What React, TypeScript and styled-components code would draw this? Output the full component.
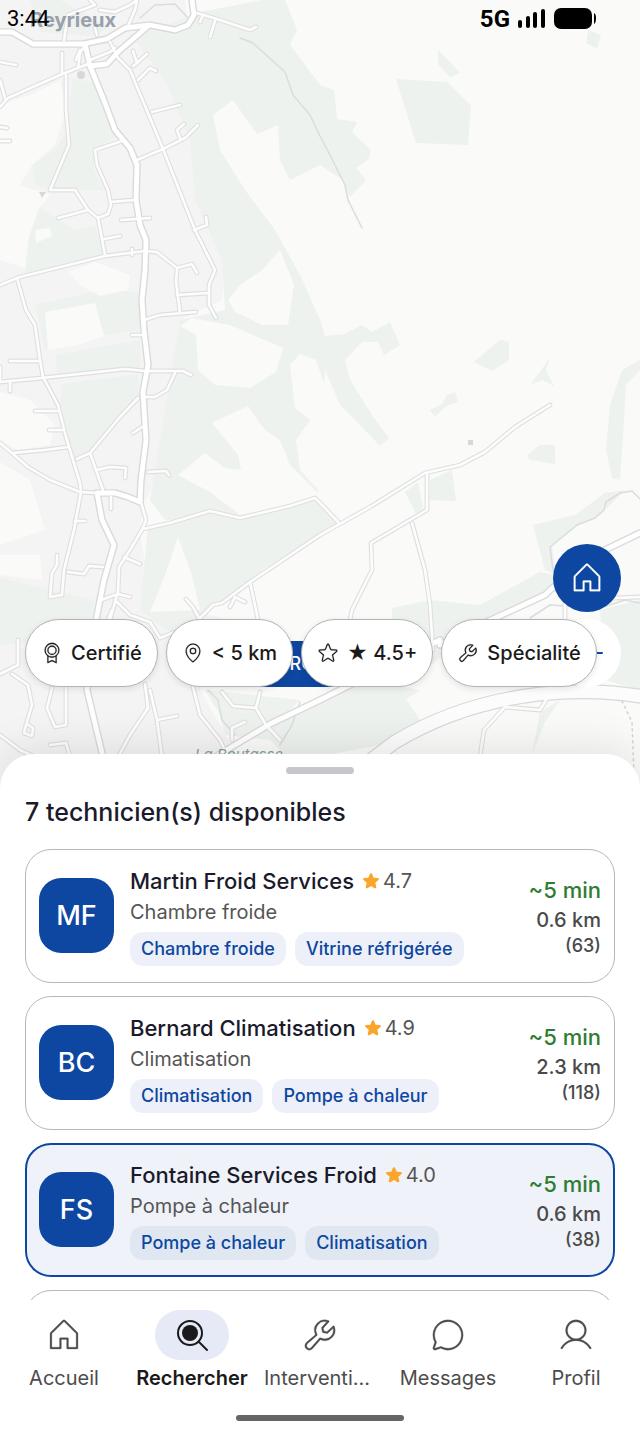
import { useState } from "react";
import styled, { createGlobalStyle } from "styled-components";
import {
   PiChatCircleLight,
   PiHouseLight,
   PiMapPinLight,
   PiMedalLight,
   PiStarFill,
   PiStarLight,
   PiUserLight,
   PiWrenchLight,
} from "react-icons/pi";

interface Technician {
   id: number;
   initials: string;
   name: string;
   rating: string;
   job: string;
   tags: string[];
   eta: string;
   distance: string;
   reviews: number;
}

const technicians: Technician[] = [
   {
      id: 1,
      initials: "MF",
      name: "Martin Froid Services",
      rating: "4.7",
      job: "Chambre froide",
      tags: ["Chambre froide", "Vitrine réfrigérée"],
      eta: "~5 min",
      distance: "0.6 km",
      reviews: 63,
   },
   {
      id: 2,
      initials: "BC",
      name: "Bernard Climatisation",
      rating: "4.9",
      job: "Climatisation",
      tags: ["Climatisation", "Pompe à chaleur"],
      eta: "~5 min",
      distance: "2.3 km",
      reviews: 118,
   },
   {
      id: 3,
      initials: "FS",
      name: "Fontaine Services Froid",
      rating: "4.0",
      job: "Pompe à chaleur",
      tags: ["Pompe à chaleur", "Climatisation"],
      eta: "~5 min",
      distance: "0.6 km",
      reviews: 38,
   },
];

const filters = [
   { label: "Certifié", icon: <PiMedalLight /> },
   { label: "< 5 km", icon: <PiMapPinLight /> },
   { label: "★ 4.5+", icon: <PiStarLight /> },
   { label: "Spécialité", icon: <PiWrenchLight /> },
];

const tabs = [
   { label: "Accueil", icon: <PiHouseLight /> },
   { label: "Rechercher", icon: <SearchIcon /> },
   { label: "Interventions", icon: <PiWrenchLight /> },
   { label: "Messages", icon: <PiChatCircleLight /> },
   { label: "Profil", icon: <PiUserLight /> },
];

const builtUp =
   "M0 0H185L190 40L165 60L195 120L200 180L230 235L222 300L180 320L172 400L165 470L145 500L140 530L150 600L230 620L200 690L240 760L230 800H0Z";

const woods = [
   "M30 0H60L110 28L90 36L40 32Z",
   "M130 34L170 24L200 12L262 0H285L297 30L290 45L320 85L334 90L337 119L357 122L352 132L371 150L368 160L356 168L366 180L350 197L343 180L320 165L290 180L280 160L278 125L257 134L233 100L213 115L220 150L245 190L275 230L300 275L320 320L325 336L345 334L362 325L372 332L390 322L400 345L384 355L378 342L362 342L345 360L350 380L372 415L389 438L380 446L355 420L340 405L325 370L318 500L290 506L240 518L165 520L150 500L160 440L170 380L180 320L225 310L222 260L195 200L190 140L165 80Z",
   "M72 78L100 84L118 135L96 150L94 170L105 190L75 190L50 190L35 185L32 165L55 150L68 130Z",
   "M40 208L75 230L95 225L104 255L25 275L30 235Z",
   "M148 526L210 513L240 520L315 500L338 522L320 535L262 570L215 606L180 640L140 610Z",
   "M35 305L100 290L140 292V330L100 336L45 350L40 325Z",
   "M55 355L140 340L140 368L58 376Z",
   "M62 384L138 374L140 395L90 452L74 458L60 410Z",
   "M0 578L50 590L95 600L85 640L0 645Z",
   "M396 79L447 82L471 106L468 145L416 143Z",
   "M438 50L460 73L450 77L438 64Z",
   "M588 30L601 35L597 49L586 43Z",
   "M474 362L500 340L509 342V360L492 371Z",
   "M430 410L442 404L447 395L455 392L458 402L445 407L435 417Z",
   "M530 385L550 358L546 370L554 386L542 380Z",
   "M527 455L540 445L555 445V464L530 460Z",
   "M430 480L452 470L456 501L430 500Z",
   "M405 492L418 482L424 512L416 514Z",
   "M640 360L622 370L610 405L606 450L612 478L620 480L624 420L626 385L640 370Z",
   "M533 525L575 515L605 493L625 490L600 515L577 526L552 546L556 575L545 570Z",
   "M392 608L430 600L480 605L540 572L556 575L550 590L480 625L400 690L420 720L380 745L300 760L330 715L392 660Z",
   "M205 690L220 715L225 735L270 740L300 770L420 690L360 680L280 720L300 700Z",
   "M540 712L560 700L545 722L532 754Z",
   "M600 610L640 600V690L605 680Z",
];

const fields = [
   "M0 105L30 95L60 80L66 110L55 145L32 165L20 185L50 195L38 210L28 240L25 268L0 260Z",
   "M45 312L95 303L104 336L78 345L48 350Z",
   "M68 272L95 262L130 275L128 290L100 296L80 285Z",
   "M35 230L50 228L52 236L36 243Z",
   "M0 392L30 400L55 425L50 445L18 450L0 440Z",
   "M0 462L30 480L45 530L0 545Z",
   "M0 555L40 555L42 580L0 575Z",
   "M192 318L230 325L283 348L276 372L250 388L215 385L198 370L196 335L180 326Z",
   "M228 300L240 285L262 270L280 250L294 285L288 325L262 325L235 312Z",
   "M212 423L235 412L248 406L265 430L280 440L290 465L320 495L318 498L290 505L240 515L210 492L178 475L205 453L225 468L241 470L238 455Z",
   "M290 365L300 354L316 360L330 400L340 405L380 446L345 485L318 490L300 470L296 440L310 420L295 408Z",
   "M178 537L192 575L200 610L150 612L165 575Z",
];

const lanes = [
   "M0 107L8 98L60 75L88 64",
   "M0 62L16 65M0 127L7 128M0 141L10 141M0 80L5 98",
   "M66 75L66 110L69 145L50 190L75 190L88 210L98 218L105 255",
   "M98 218L108 214L111 205L108 190L97 165L95 150L122 141",
   "M110 202L134 200M58 218L88 210M62 53V74M104 239L120 236M121 220L150 218M132 249V255",
   "M0 285L20 277L105 256L145 251L157 252L177 268L176 282L180 312",
   "M177 268L192 264L197 273M177 295L209 293",
   "M17 278L26 310L35 325L40 360L43 377L58 405L66 437L80 483L81 492L74 530L64 570L62 595L50 597L52 573L57 565V555",
   "M0 443L12 453L28 467L50 480L80 492L97 493",
   "M0 382L42 378L125 369L145 371L183 371L191 375",
   "M175 373L167 390L155 397L143 397",
   "M138 398L120 417L90 453L77 459M90 453L96 470L103 490",
   "M96 470L110 467L126 468L125 478M12 453L45 450L68 447",
   "M35 411H58M49 430H63M10 361H39M10 381V391M0 367V382M132 335H143",
   "M76 60L80 50M110 42L118 58L130 70L163 149L195 230L215 270L209 285L209 305L216 318",
   "M137 160L163 149L185 138L198 125M180 138L177 130L184 124M152 112L180 105",
   "M133 51L137 63L133 66M137 63L147 54M138 80L150 68L156 71",
   "M194 230L207 225L206 217M144 320L160 315L196 312",
   "M148 472L166 471L169 475M133 433L142 427M75 521H85M111 497V509",
   "M141 502L146 520L143 528L130 550L119 567L118 592L110 620",
   "M143 529L170 523L210 511L240 518L290 506L315 498L325 508L338 522",
   "M68 572L84 574L89 566L103 567M124 557L140 564M101 600L118 594L130 597",
   "M200 618L213 605L222 603L250 582L320 535L370 507L425 473L460 465L485 452L515 427L550 405",
   "M427 473L427 510L371 543L372 570L352 610L346 640",
   "M412 523L425 570L430 605L433 650",
   "M250 582L256 610L262 640M186 599L193 607L200 620M230 607L235 597L245 602",
   "M115 600L130 615L150 622L160 638L175 632M112 610L100 640",
   "M64 40L68 15L95 5L90 0M100 10L115 12L130 5L137 0L135 10L128 26M97 35L95 28",
   "M78 68L80 53L84 47M90 60L110 52L115 48",
   "M197 13L220 20L250 30L256 27M215 21L210 37M203 15L200 22",
   "M18 640V665L0 674M12 674L28 685L32 705L26 725L24 733L32 736L33 728L27 724",
   "M52 688L47 708L55 727L66 725V688M50 745L66 743L70 757",
   "M145 684L148 708L130 735L118 757M150 690L157 720L162 757M157 720L177 716",
   "M193 687L200 715L220 740L228 757M222 692L233 706L256 708L260 692",
   "M256 708L266 725L280 740M232 740L232 728L245 722",
   "M480 757L484 730L505 707L540 710L548 697M565 620V600L640 597",
   "M0 735L20 750L35 757",
];

const mainRoads = [
   "M0 32L12 32L33 44L83 44L107 39L125 28L150 25L175 30L188 25L194 15L192 0",
   "M85 44L90 66L105 103L115 130L130 148L137 165L136 200L140 225L146 240L145 270L142 300L144 330L148 365L143 392L146 440L141 480L140 502L128 497L115 493L97 493L102 520L114 545L104 580L96 620L87 690L103 757",
   "M90 66L107 64L118 52L148 26",
   "M440 645L480 625L545 595L580 562L640 533",
   "M215 757L270 724L320 700L360 680L440 640",
];

const streams = [
   "M240 38L253 43L285 72L293 95L310 115L320 136L330 155L345 185L348 200L362 228",
   "M140 18L155 5L175 4L187 17",
   "M553 570L550 547L577 525L595 518L604 510L606 502L620 493L632 491L640 499",
   "M530 618L550 605L600 608L625 600L640 603",
   "M208 690L218 700L222 720L235 735M300 702L292 725L280 745",
];

function MapArt() {
   return (
      <MapCanvas
         viewBox="0 0 640 800"
         preserveAspectRatio="xMidYMin slice"
         aria-hidden="true"
      >
         <rect width="640" height="800" fill="#fafaf8" />
         <path d={builtUp} fill="#f4f4f4" />
         {woods.map((d) => (
            <path key={d} d={d} fill="#edf2ee" />
         ))}
         {fields.map((d) => (
            <path key={d} d={d} fill="#fafaf8" />
         ))}
         <g fill="none" strokeLinejoin="round" strokeLinecap="round">
            {streams.map((d) => (
               <path key={d} d={d} stroke="#dadddc" strokeWidth="1.5" />
            ))}
            {lanes.map((d) => (
               <path key={d} d={d} stroke="#dfdfe1" strokeWidth="4.8" />
            ))}
            {mainRoads.map((d) => (
               <path key={d} d={d} stroke="#dadadc" strokeWidth="7.6" />
            ))}
            <path
               d="M360 768L395 742Q460 703 540 694Q600 688 650 698"
               stroke="#d8d8da"
               strokeWidth="15"
            />
            {lanes.map((d) => (
               <path key={d} d={d} stroke="#fdfdfd" strokeWidth="2.6" />
            ))}
            {mainRoads.map((d) => (
               <path key={d} d={d} stroke="#ffffff" strokeWidth="4.8" />
            ))}
            <path
               d="M360 768L395 742Q460 703 540 694Q600 688 650 698"
               stroke="#fcfcfc"
               strokeWidth="12.6"
            />
            <path
               d="M622 701L632 722L634 775"
               stroke="#dccfd0"
               strokeWidth="1.5"
               strokeDasharray="2 4"
            />
         </g>
         <circle cx="81" cy="75" r="4" fill="#d5d9da" />
         <path d="M39 192H46L42 198Z" fill="#d5d9da" />
         <rect x="468" y="440" width="5" height="5" fill="#d5d9d7" />
      </MapCanvas>
   );
}

function SearchIcon() {
   return (
      <svg viewBox="0 0 38 38" fill="none" stroke="currentColor">
         <circle cx="17" cy="17" r="12" strokeWidth="2" />
         <circle cx="17" cy="17" r="8" fill="currentColor" stroke="none" />
         <path d="M26 26L34 34" strokeWidth="2" strokeLinecap="round" />
      </svg>
   );
}

function LocateIcon() {
   return (
      <svg
         width="34"
         height="34"
         viewBox="0 0 34 34"
         fill="none"
         stroke="currentColor"
         strokeWidth="2"
         strokeLinecap="round"
      >
         <circle cx="17" cy="17" r="9" />
         <path d="M17 2V8M17 26V32M2 17H8M26 17H32" />
      </svg>
   );
}

function SignalIcons() {
   return (
      <svg width="80" height="22" viewBox="0 0 80 22" aria-hidden="true">
         <rect x="1" y="12" width="4" height="8" rx="2" />
         <rect x="9" y="8" width="4" height="12" rx="2" />
         <rect x="16" y="4" width="4" height="16" rx="2" />
         <rect x="24" y="1" width="4" height="19" rx="2" />
         <rect x="37" y="0" width="38" height="21" rx="7" />
         <path d="M77 5Q79 6 79 10Q79 15 77 16Z" />
      </svg>
   );
}

function App() {
   const [selected, setSelected] = useState(3);
   const [tab, setTab] = useState("Rechercher");

   return (
      <Screen>
         <GlobalStyle />
         <MapArea>
            <MapArt />
            <TownLabel>Reyrieux</TownLabel>
            <PlaceLabel>La Boutasse</PlaceLabel>
            <StatusBar>
               <time>3:44</time>
               <StatusRight>
                  <strong>5G</strong>
                  <SignalIcons />
               </StatusRight>
            </StatusBar>
            <Marker>PRO</Marker>
            <FloatingActions>
               <RoundButton $filled type="button" aria-label="Domicile">
                  <PiHouseLight />
               </RoundButton>
               <RoundButton type="button" aria-label="Ma position">
                  <LocateIcon />
               </RoundButton>
            </FloatingActions>
            <Filters>
               {filters.map((filter) => (
                  <FilterChip key={filter.label} type="button">
                     {filter.icon}
                     {filter.label}
                  </FilterChip>
               ))}
            </Filters>
         </MapArea>
         <Sheet>
            <Handle />
            <SheetTitle>7 technicien(s) disponibles</SheetTitle>
            <TechnicianList>
               {technicians.map((tech) => (
                  <li key={tech.id}>
                     <Card
                        type="button"
                        $selected={tech.id === selected}
                        onClick={() => setSelected(tech.id)}
                     >
                        <Avatar>{tech.initials}</Avatar>
                        <Info>
                           <NameRow>
                              <Name>{tech.name}</Name>
                              <Rating>
                                 <PiStarFill />
                                 {tech.rating}
                              </Rating>
                           </NameRow>
                           <Job>{tech.job}</Job>
                           <Tags>
                              {tech.tags.map((tag) => (
                                 <Tag key={tag} $selected={tech.id === selected}>
                                    {tag}
                                 </Tag>
                              ))}
                           </Tags>
                        </Info>
                        <Meta>
                           <Eta>{tech.eta}</Eta>
                           <Distance>{tech.distance}</Distance>
                           <Reviews>({tech.reviews})</Reviews>
                        </Meta>
                     </Card>
                  </li>
               ))}
               <li>
                  <Card type="button" aria-label="Technicien suivant" />
               </li>
            </TechnicianList>
         </Sheet>
         <BottomBar>
            <TabList>
               {tabs.map(({ label, icon }) => (
                  <Tab
                     key={label}
                     type="button"
                     $active={label === tab}
                     onClick={() => setTab(label)}
                  >
                     <TabIcon $active={label === tab}>{icon}</TabIcon>
                     <TabLabel>{label}</TabLabel>
                  </Tab>
               ))}
            </TabList>
            <HomeIndicator />
         </BottomBar>
      </Screen>
   );
}

export default App;

const GlobalStyle = createGlobalStyle`
   :root {
      --blue: #0d47a1;
      --ink: #1a1a2a;
      --gray: #555555;
      --line: #b8b8bb;
   }
   * {
      box-sizing: border-box;
   }
   body {
      margin: 0;
      background-color: white;
      font-family: Inter, "Liberation Sans", sans-serif;
   }
   button {
      font-family: inherit;
      cursor: pointer;
   }
`;

const Screen = styled.div`
   display: flex;
   flex-direction: column;
   height: 100vh;
   overflow: hidden;
`;

const MapArea = styled.section`
   position: relative;
   display: flex;
   flex: 1;
   flex-direction: column;
   justify-content: space-between;
   min-height: 0;
`;

const MapCanvas = styled.svg`
   position: absolute;
   top: 0;
   left: 0;
   width: 100%;
   height: calc(100% + 46px);
`;

const TownLabel = styled.span`
   position: absolute;
   top: 8px;
   left: 30px;
   font-size: 20px;
   line-height: 24px;
   font-weight: 700;
   color: #97a0ab;
`;

const PlaceLabel = styled.span`
   position: absolute;
   bottom: -11px;
   left: 195px;
   font-size: 15px;
   line-height: 20px;
   font-style: italic;
   color: #8aa1a1;
`;

const StatusBar = styled.header`
   position: relative;
   display: flex;
   justify-content: space-between;
   align-items: center;
   padding: 7px 43px 0 7px;
   font-family: Roboto, sans-serif;
   font-size: 22px;
   line-height: 24px;
   color: black;
`;

const StatusRight = styled.div`
   display: flex;
   align-items: center;
   gap: 7px;
   strong {
      font-size: 24px;
   }
`;

const Marker = styled.div`
   position: absolute;
   bottom: 67px;
   left: 260px;
   padding: 0 18px;
   font-size: 18px;
   line-height: 46px;
   font-weight: 500;
   color: white;
   background-color: var(--blue);
`;

const FloatingActions = styled.div`
   position: absolute;
   right: 19px;
   bottom: 67px;
   display: flex;
   flex-direction: column;
   gap: 7px;
`;

const RoundButton = styled.button<{ $filled?: boolean }>`
   display: flex;
   justify-content: center;
   align-items: center;
   width: 68px;
   height: 68px;
   padding: 0;
   border: none;
   border-radius: 50%;
   font-size: 36px;
   color: ${({ $filled }) => ($filled ? "white" : "var(--blue)")};
   background-color: ${({ $filled }) => ($filled ? "var(--blue)" : "white")};
   svg {
      stroke: currentColor;
      stroke-width: 2px;
   }
`;

const Filters = styled.div`
   position: relative;
   display: flex;
   gap: 8px;
   padding: 0 25px 67px;
   pointer-events: none;
`;

const FilterChip = styled.button`
   display: flex;
   align-items: center;
   gap: 8px;
   height: 68px;
   padding: 0 15px;
   border: 1px solid #b4b4b6;
   border-radius: 34px;
   font-size: 20px;
   font-weight: 500;
   white-space: nowrap;
   color: #1a1a1a;
   background-color: white;
   box-shadow: 0 2px 6px rgba(0, 0, 0, 0.1);
   pointer-events: auto;
   svg {
      font-size: 22px;
      stroke: currentColor;
      stroke-width: 3px;
   }
`;

const Sheet = styled.section`
   position: relative;
   display: flex;
   flex: 0 0 38%;
   flex-direction: column;
   padding: 13px 25px 0;
   overflow: hidden;
   border-radius: 34px 34px 0 0;
   background-color: white;
   box-shadow: 0 -8px 40px rgba(0, 0, 0, 0.09);
`;

const Handle = styled.div`
   flex: none;
   align-self: center;
   width: 68px;
   height: 7px;
   border-radius: 4px;
   background-color: #c6c6cb;
`;

const SheetTitle = styled.h1`
   margin: 22px 0 20px;
   font-size: 25px;
   line-height: 33px;
   font-weight: 500;
   color: var(--ink);
`;

const TechnicianList = styled.ul`
   display: flex;
   flex-direction: column;
   gap: 13px;
   margin: 0;
   padding: 0;
   list-style: none;
`;

const Card = styled.button<{ $selected?: boolean }>`
   display: flex;
   align-items: center;
   gap: 16px;
   width: 100%;
   height: 134px;
   padding: ${({ $selected }) => ($selected ? "0 12px" : "0 13px")};
   border: ${({ $selected }) =>
      $selected ? "2px solid var(--blue)" : "1px solid var(--line)"};
   border-radius: 26px;
   text-align: left;
   background-color: ${({ $selected }) => ($selected ? "#eff3f9" : "white")};
`;

const Avatar = styled.div`
   flex: none;
   width: 75px;
   height: 75px;
   border-radius: 22px;
   font-size: 27px;
   line-height: 75px;
   font-weight: 500;
   text-align: center;
   color: white;
   background-color: var(--blue);
`;

const Info = styled.div`
   flex: 1;
   min-width: 0;
`;

const NameRow = styled.div`
   display: flex;
   align-items: center;
   gap: 8px;
`;

const Name = styled.span`
   font-size: 22px;
   line-height: 30px;
   font-weight: 500;
   color: var(--ink);
`;

const Rating = styled.span`
   display: flex;
   align-items: center;
   gap: 3px;
   font-size: 20px;
   color: var(--gray);
   svg {
      font-size: 18px;
      color: #f9a62b;
   }
`;

const Job = styled.div`
   font-size: 20px;
   line-height: 32px;
   color: var(--gray);
`;

const Tags = styled.div`
   display: flex;
   gap: 9px;
   margin-top: 4px;
`;

const Tag = styled.span<{ $selected: boolean }>`
   padding: 0 11px;
   border-radius: 13px;
   font-size: 18px;
   line-height: 34px;
   font-weight: 500;
   white-space: nowrap;
   color: var(--blue);
   background-color: ${({ $selected }) => ($selected ? "#e0e7f1" : "#edf0f9")};
`;

const Meta = styled.div`
   flex: none;
   text-align: right;
   font-weight: 500;
   color: #4a4a4a;
`;

const Eta = styled.div`
   font-size: 22px;
   line-height: 30px;
   color: #2e7d32;
`;

const Distance = styled.div`
   font-size: 20px;
   line-height: 30px;
`;

const Reviews = styled.div`
   font-size: 18px;
   line-height: 22px;
`;

const BottomBar = styled.footer`
   position: relative;
   display: flex;
   flex: none;
   flex-direction: column;
   align-items: center;
   padding: 10px 0 16px;
   background-color: white;
`;

const TabList = styled.nav`
   display: grid;
   grid-template-columns: repeat(5, 1fr);
   width: 100%;
`;

const Tab = styled.button<{ $active: boolean }>`
   display: flex;
   flex-direction: column;
   align-items: center;
   gap: 4px;
   min-width: 0;
   padding: 0 8px;
   border: none;
   font-size: 20px;
   font-weight: ${({ $active }) => ($active ? 600 : 400)};
   color: ${({ $active }) => ($active ? "#1a1a1a" : "#4c4c4c")};
   background: none;
`;

const TabIcon = styled.span<{ $active: boolean }>`
   display: flex;
   justify-content: center;
   align-items: center;
   width: 74px;
   height: 50px;
   border-radius: 25px;
   background-color: ${({ $active }) => ($active ? "#e6eaf7" : "transparent")};
   svg {
      width: 38px;
      height: 38px;
   }
   svg[viewBox="0 0 256 256"] {
      stroke: currentColor;
      stroke-width: 2px;
   }
`;

const TabLabel = styled.span`
   max-width: 100%;
   overflow: hidden;
   line-height: 28px;
   text-overflow: ellipsis;
   white-space: nowrap;
`;

const HomeIndicator = styled.div`
   width: 168px;
   height: 6px;
   margin-top: 23px;
   border-radius: 3px;
   background-color: #666666;
`;
